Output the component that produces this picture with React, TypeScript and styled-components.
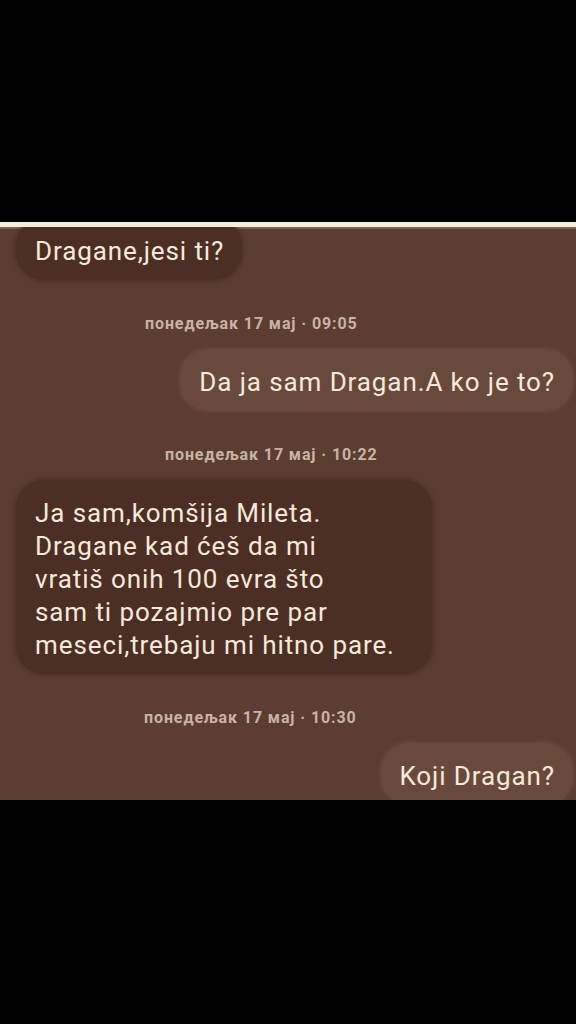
import React, { FC, ReactElement } from 'react';
import styled, { createGlobalStyle } from 'styled-components';

const GlobalStyle = createGlobalStyle`
  html, body {
    margin: 0;
    padding: 0;
    background: #000;
  }
  body {
    font-family: Roboto, "Noto Sans", "Liberation Sans", sans-serif;
    -webkit-font-smoothing: antialiased;
  }
`;

const Frame = styled.div`
  width: 576px;
  height: 1024px;
  background: #000;
  padding-top: 222px;
  box-sizing: border-box;
  overflow: hidden;
`;

const Screen = styled.div`
  height: 578px;
  box-sizing: border-box;
  border-top: 5px solid #f4efdc;
  background: #5b3d31;
  overflow: hidden;
  display: flex;
  flex-direction: column;
`;

const EdgeLine = styled.div`
  height: 2px;
  flex-shrink: 0;
  background: #7b6555;
`;

const Thread = styled.div`
  display: flex;
  flex-direction: column;
  padding: 0 3px 0 16px;
  margin-top: -11px;
`;

const Bubble = styled.div<{ $mine?: boolean; $width?: number }>`
  align-self: ${(p) => (p.$mine ? 'flex-end' : 'flex-start')};
  width: ${(p) => (p.$width ? `${p.$width}px` : 'auto')};
  box-sizing: border-box;
  max-width: 440px;
  padding: 17px 18px 12px 19px;
  border-radius: 28px;
  background: ${(p) => (p.$mine ? '#684a3d' : '#4b2f25')};
  box-shadow: 0 0 4px 1px ${(p) => (p.$mine ? '#684a3d' : '#4b2f25')};
  color: #f6e9d8;
  font-size: 26px;
  line-height: 33px;
  letter-spacing: 0.9px;
  white-space: pre-line;
  margin-bottom: 34px;
`;

const Stamp = styled.div<{ $indent: number }>`
  padding-left: ${(p) => p.$indent}px;
  margin-left: -16px;
  font-size: 16px;
  font-weight: 700;
  line-height: 20px;
  letter-spacing: 0.9px;
  color: #c9b3a6;
  margin-bottom: 15px;
`;

type Item =
  | { kind: 'msg'; text: string; mine?: boolean; width?: number }
  | { kind: 'stamp'; text: string; indent: number };

const items: Item[] = [
  { kind: 'msg', text: 'Dragane,jesi ti?' },
  { kind: 'stamp', text: 'понедељак 17 мај · 09:05', indent: 145 },
  { kind: 'msg', text: 'Da ja sam Dragan.A ko je to?', mine: true },
  { kind: 'stamp', text: 'понедељак 17 мај · 10:22', indent: 165 },
  {
    kind: 'msg',
    text: 'Ja sam,komšija Mileta.\nDragane kad ćeš da mi\nvratiš onih 100 evra što\nsam ti pozajmio pre par\nmeseci,trebaju mi hitno pare.',
    width: 416,
  },
  { kind: 'stamp', text: 'понедељак 17 мај · 10:30', indent: 144 },
  { kind: 'msg', text: 'Koji Dragan?', mine: true },
];

const App: FC = (): ReactElement => {
  return (
    <Frame>
      <GlobalStyle />
      <Screen>
        <EdgeLine />
        <Thread>
          {items.map((item, i) =>
            item.kind === 'msg' ? (
              <Bubble key={i} $mine={item.mine} $width={item.width}>
                {item.text}
              </Bubble>
            ) : (
              <Stamp key={i} $indent={item.indent}>
                {item.text}
              </Stamp>
            )
          )}
        </Thread>
      </Screen>
    </Frame>
  );
};

export default App;
